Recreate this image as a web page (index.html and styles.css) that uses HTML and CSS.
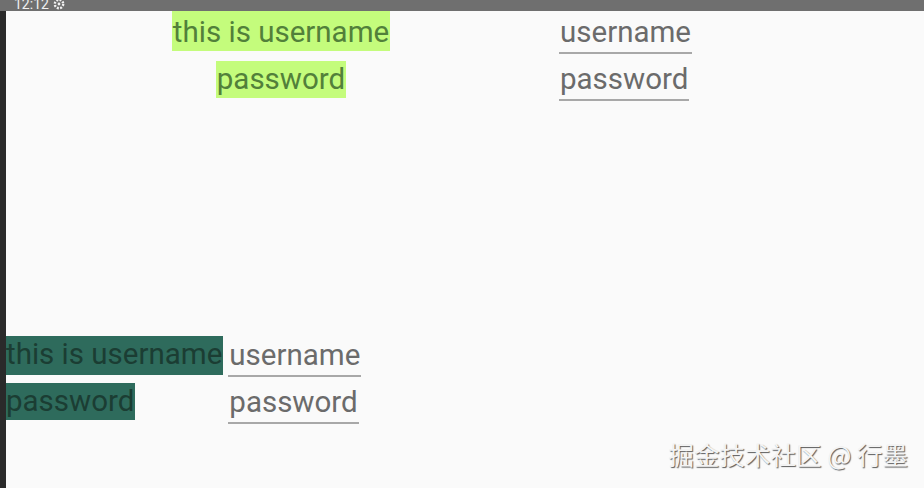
FILE: index.html
```html
<!DOCTYPE html>
<html>
<head>
    <title>Layout Demo</title>
    <link rel="stylesheet" href="styles.css">
</head>
<body>
    <div class="status-bar">
        <span class="clock">12:12</span>
        <svg class="gear" width="12" height="12" viewBox="0 0 12 12">
            <circle cx="6" cy="6" r="4.2" fill="none" stroke="#f2f2f2" stroke-width="2.4" stroke-dasharray="2 1.3"/>
            <circle cx="6" cy="6" r="1.4" fill="#f2f2f2"/>
        </svg>
    </div>
    <div class="screen">
        <div class="edge"></div>
        <div class="content">
            <div class="top-form">
                <div class="labels">
                    <div class="label light">this is username</div>
                    <div class="label light">password</div>
                </div>
                <div class="fields">
                    <div class="field">username</div>
                    <div class="field">password</div>
                </div>
            </div>

            <div class="bottom-form">
                <div class="labels-left">
                    <div class="label dark">this is username</div>
                    <div class="label dark">password</div>
                </div>
                <div class="fields fields-left">
                    <div class="field">username</div>
                    <div class="field">password</div>
                </div>
            </div>

            <div class="watermark">掘金技术社区 @ 行墨</div>
        </div>
    </div>
</body>
</html>
```

FILE: styles.css
```css
body {
    margin: 0;
    width: 924px;
    height: 488px;
    overflow: hidden;
    background: #fafafa;
    font-family: Roboto, 'Noto Sans', sans-serif;
}

.status-bar {
    height: 11px;
    background: #6f6f6f;
    display: flex;
    align-items: flex-end;
    gap: 4px;
    padding-left: 14px;
    overflow: hidden;
}

.clock {
    color: #f0f0f0;
    font-size: 14px;
    line-height: 14px;
}

.gear {
    margin-bottom: 1px;
}

.screen {
    display: flex;
    height: 477px;
}

.edge {
    width: 6px;
    background: #2a2a2a;
}

.content {
    flex: 1;
    display: flex;
    flex-direction: column;
}

.top-form {
    display: flex;
}

.labels {
    width: 550px;
    display: flex;
    flex-direction: column;
    align-items: center;
    gap: 10px;
}

.label {
    font-size: 29.5px;
    line-height: 37px;
    padding: 0 1px;
}

.label.light {
    background: #c4fc7c;
    color: #52803a;
}

.labels .label:first-child {
    padding-top: 3px;
}

.label.dark {
    background: #2e6b5c;
    color: #1b3d33;
    padding: 0 1px 0 0;
}

.fields {
    display: flex;
    flex-direction: column;
    align-items: flex-start;
    gap: 7px;
    padding-left: 3px;
    padding-top: 3px;
}

.field {
    font-size: 29.5px;
    line-height: 37px;
    color: #6b6b6b;
    border-bottom: 2px solid #a8a8a8;
    padding: 0 1px 1px;
}

.bottom-form {
    display: flex;
    margin-top: 235px;
}

.labels-left {
    display: flex;
    flex-direction: column;
    align-items: flex-start;
    gap: 8px;
}

.labels-left .label:first-child {
    padding-bottom: 2px;
}

.fields-left {
    padding-left: 5px;
    padding-top: 1px;
}

.watermark {
    align-self: flex-end;
    margin: 14px 16px 0 0;
    font-family: 'Noto Sans CJK SC', sans-serif;
    font-size: 25.5px;
    line-height: 32px;
    color: #f4f4f4;
    text-shadow: 1px 1px 1px #5a5a5a;
}
```
